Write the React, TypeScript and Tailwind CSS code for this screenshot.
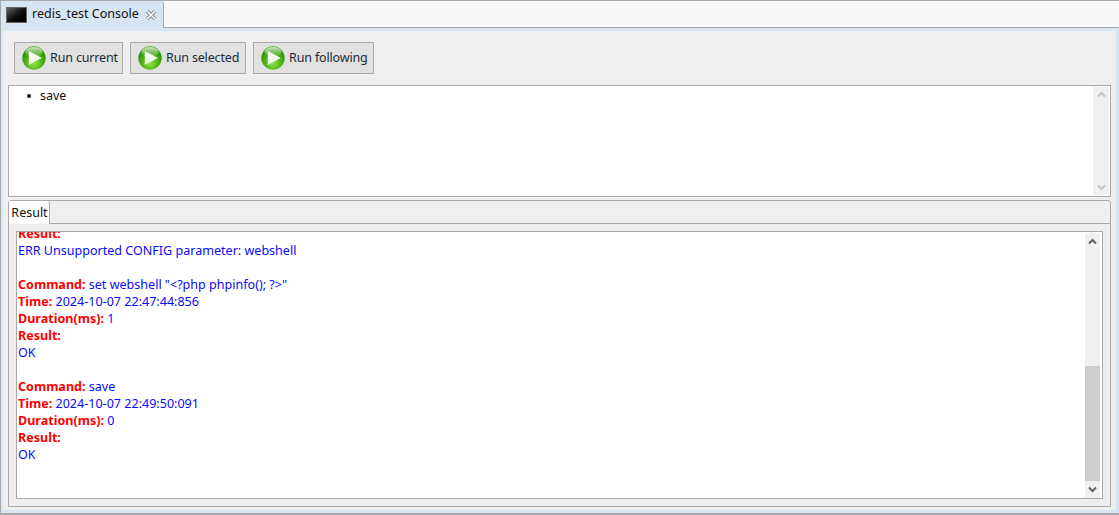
const font = { fontFamily: '"Noto Sans", sans-serif' };

function RunIcon() {
  return (
    <svg width="24" height="24" viewBox="0 0 24 24" className="shrink-0">
      <defs>
        <radialGradient id="rg" cx="50%" cy="72%" r="62%">
          <stop offset="0%" stopColor="#98e24e" />
          <stop offset="55%" stopColor="#4fb514" />
          <stop offset="90%" stopColor="#2f9406" />
          <stop offset="100%" stopColor="#4aa81c" />
        </radialGradient>
        <linearGradient id="gl" x1="0" y1="0" x2="0" y2="1">
          <stop offset="0%" stopColor="#ffffff" stopOpacity="0.7" />
          <stop offset="100%" stopColor="#ffffff" stopOpacity="0.05" />
        </linearGradient>
        <linearGradient id="tri" x1="0" y1="0" x2="0" y2="1">
          <stop offset="0%" stopColor="#ffffff" />
          <stop offset="100%" stopColor="#e6f7d4" />
        </linearGradient>
      </defs>
      <circle cx="12" cy="12" r="11.7" fill="url(#rg)" />
      <ellipse cx="12" cy="6" rx="8.5" ry="5" fill="url(#gl)" />
      <path d="M6.8 5 L19.8 12 L6.8 19 Z" fill="url(#tri)" />
    </svg>
  );
}

function RunButton({ label, w }: { label: string; w: string }) {
  return (
    <div className={`flex h-[32px] items-center gap-[4px] border border-[#a9a9a9] bg-[#e1e1e1] pl-[7px] ${w}`}>
      <RunIcon />
      <span className="text-[12.5px] tracking-[-0.15px] text-[#1a2a3a]">{label}</span>
    </div>
  );
}

function Chevron({ up, color }: { up: boolean; color: string }) {
  return (
    <svg width="9" height="7" viewBox="0 0 9 7">
      <path d={up ? "M1 5.5 L4.5 2 L8 5.5" : "M1 1.5 L4.5 5 L8 1.5"} fill="none" stroke={color} strokeWidth="2" />
    </svg>
  );
}

function Line({ k, v }: { k?: string; v?: string }) {
  return (
    <div className="h-[17px] whitespace-pre text-[12.55px] leading-[17px]">
      {k && <span className="font-bold text-[#ff0000]">{k}</span>}
      {k && v ? " " : ""}
      {v && <span className="text-[#0a0aff]">{v}</span>}
    </div>
  );
}

export default function App() {
  return (
    <div className="flex h-[515px] w-[1119px] flex-col overflow-hidden border-t border-b-2 border-l border-[#a9a9a9] bg-[#d7e4f2]" style={font}>
      <div className="flex h-[27px] shrink-0 bg-[#f8f8f8]">
        <div className="flex w-[163px] items-center rounded-tr-[3px] border-r border-[#a9a9a9] bg-[#d7e4f2] pl-[5px]">
          <div className="h-[16px] w-[21px] border border-[#666] bg-gradient-to-br from-[#666] via-[#111] to-[#000]" />
          <span className="ml-[5px] text-[12.5px] text-[#111]">redis_test Console</span>
          <svg width="12" height="12" viewBox="0 0 12 12" className="ml-[6px]">
            <path d="M2 2 L10 10 M10 2 L2 10" stroke="#888" strokeWidth="3.4" />
            <path d="M2 2 L10 10 M10 2 L2 10" stroke="#fff" strokeWidth="1.6" />
          </svg>
        </div>
        <div className="flex-1 border-b border-[#a9a9a9]" />
      </div>
      <div className="ml-[2px] mr-[3px] mt-[3px] flex min-h-0 flex-1 flex-col bg-[#efefef] px-[5px]">
        <div className="flex h-[54px] shrink-0 items-start gap-[7px] pl-[6px] pt-[11px]">
          <RunButton label="Run current" w="w-[109px]" />
          <RunButton label="Run selected" w="w-[116px]" />
          <RunButton label="Run following" w="w-[121px]" />
        </div>
        <div className="flex h-[112px] shrink-0 border border-[#a9a9a9] bg-white">
          <div className="flex-1 pl-[18px] pt-[1px] text-[12.5px] leading-[18px] text-[#111]">
            <span className="mr-[9px] inline-block h-[4px] w-[4px] rounded-full bg-[#111] align-[2px]" />save
          </div>
          <div className="mr-[1px] my-[1px] flex w-[16px] flex-col items-center justify-between bg-[#f0f0f0] py-[4px]">
            <Chevron up color="#c4c4c4" />
            <Chevron up={false} color="#c4c4c4" />
          </div>
        </div>
        <div className="mt-[3px] flex min-h-0 flex-1 flex-col rounded-t-[3px] border border-[#a9a9a9] bg-[#efefef]">
          <div className="flex h-[23px] shrink-0 border-b border-[#a9a9a9]">
            <div className="-mb-[1px] flex w-[41px] items-center justify-center rounded-tr-[3px] border-r border-[#a9a9a9] bg-white pl-[1px] pt-[1px] text-[12.5px] text-[#111]">
              Result
            </div>
          </div>
          <div className="flex min-h-0 flex-1 flex-col px-[7px] pb-[7px] pt-[7px]">
            <div className="flex min-h-0 flex-1 border border-[#a9a9a9] bg-white">
              <div className="min-w-0 flex-1 overflow-hidden pl-[1px]">
                <div className="-mt-[7px]">
                  <Line k="Result:" />
                  <Line v="ERR Unsupported CONFIG parameter: webshell" />
                  <Line />
                  <Line k="Command:" v={'set webshell "<?php phpinfo(); ?>"'} />
                  <Line k="Time:" v="2024-10-07 22:47:44:856" />
                  <Line k="Duration(ms):" v="1" />
                  <Line k="Result:" />
                  <Line v="OK" />
                  <Line />
                  <Line k="Command:" v="save" />
                  <Line k="Time:" v="2024-10-07 22:49:50:091" />
                  <Line k="Duration(ms):" v="0" />
                  <Line k="Result:" />
                  <Line v="OK" />
                </div>
              </div>
              <div className="mr-[2px] mt-[1px] flex w-[15px] flex-col bg-[#f0f0f0]">
                <div className="flex h-[17px] items-center justify-center"><Chevron up color="#606060" /></div>
                <div className="flex-1" />
                <div className="h-[115px] bg-[#cdcdcd]" />
                <div className="flex h-[17px] items-center justify-center"><Chevron up={false} color="#606060" /></div>
              </div>
            </div>
          </div>
        </div>
        <div className="h-[3px] shrink-0" />
      </div>
      <div className="h-[3px] shrink-0" />
    </div>
  );
}
